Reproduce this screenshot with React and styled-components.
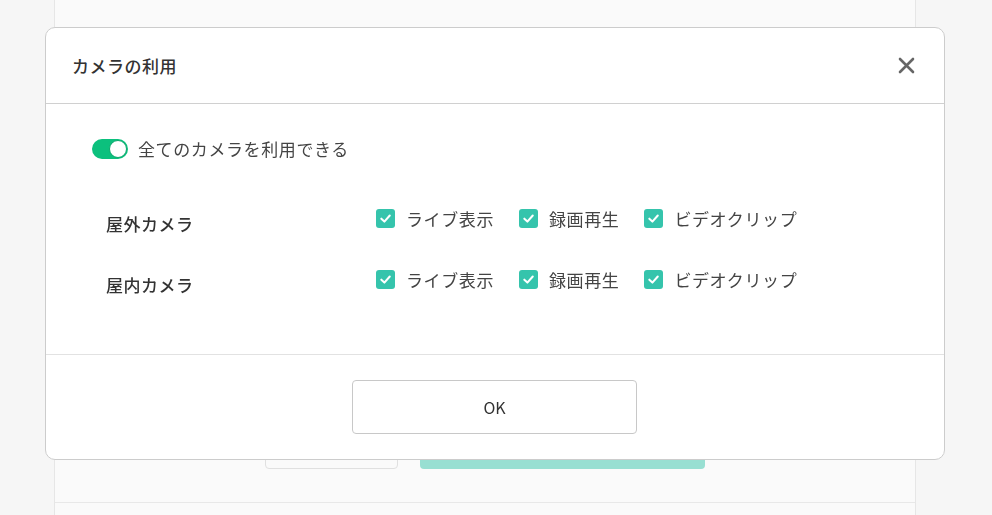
import React from "react";
import styled, { createGlobalStyle } from "styled-components";

const GlobalStyle = createGlobalStyle`
  html, body {
    margin: 0;
    padding: 0;
    background: #f6f6f6;
    font-family: "Noto Sans CJK JP", "Noto Sans", sans-serif;
    color: #333;
  }
`;

const cameras = [
  { id: "outdoor", name: "屋外カメラ" },
  { id: "indoor", name: "屋内カメラ" },
];

const permissions = ["ライブ表示", "録画再生", "ビデオクリップ"];

const CheckIcon = () => (
  <svg width="13" height="13" viewBox="0 0 14 14" fill="none">
    <path
      d="M2.5 7.2 L5.8 10.3 L11.6 3.8"
      stroke="#fff"
      strokeWidth="2.2"
      strokeLinecap="round"
      strokeLinejoin="round"
    />
  </svg>
);

const CloseIcon = () => (
  <svg width="17" height="17" viewBox="0 0 17 17" fill="none">
    <path
      d="M2 2 L15 15 M15 2 L2 15"
      stroke="#666"
      strokeWidth="2.6"
      strokeLinecap="round"
    />
  </svg>
);

const App = () => (
  <>
    <GlobalStyle />
    <Page>
      <Panel>
        <BackButtons>
          <GhostButton />
          <SaveButton />
        </BackButtons>
        <PanelDivider />
      </Panel>
    </Page>

    <Overlay>
      <Modal>
        <Header>
          <Title>カメラの利用</Title>
          <CloseButton aria-label="close">
            <CloseIcon />
          </CloseButton>
        </Header>

        <Body>
          <ToggleRow>
            <Toggle>
              <Knob />
            </Toggle>
            <ToggleLabel>全てのカメラを利用できる</ToggleLabel>
          </ToggleRow>

          <CameraList>
            {cameras.map((camera) => (
              <CameraRow key={camera.id}>
                <CameraName>{camera.name}</CameraName>
                <Options>
                  {permissions.map((label) => (
                    <Option key={label}>
                      <Box>
                        <CheckIcon />
                      </Box>
                      <OptionText>{label}</OptionText>
                    </Option>
                  ))}
                </Options>
              </CameraRow>
            ))}
          </CameraList>
        </Body>

        <Footer>
          <OkButton>OK</OkButton>
        </Footer>
      </Modal>
    </Overlay>
  </>
);

export default App;

const Page = styled.div`
  height: 515px;
  overflow: hidden;
`;

const Panel = styled.div`
  margin-left: 54px;
  width: 862px;
  height: 515px;
  background: #fafafa;
  border-left: 1px solid #e6e6e6;
  border-right: 1px solid #e6e6e6;
  display: flex;
  flex-direction: column;
  padding-top: 416px;
  box-sizing: border-box;
`;

const BackButtons = styled.div`
  display: flex;
  justify-content: center;
  gap: 22px;
`;

const GhostButton = styled.div`
  width: 133px;
  height: 53px;
  box-sizing: border-box;
  border: 1px solid #e0e0e0;
  border-radius: 4px;
  background: #fafafa;
`;

const SaveButton = styled.div`
  width: 285px;
  height: 53px;
  border-radius: 4px;
  background: #98dfd2;
`;

const PanelDivider = styled.div`
  margin-top: 33px;
  border-top: 1px solid #e8e8e8;
`;

const Overlay = styled.div`
  position: fixed;
  inset: 0;
`;

const Modal = styled.div`
  position: absolute;
  left: 45px;
  top: 27px;
  width: 900px;
  height: 433px;
  box-sizing: border-box;
  background: #fff;
  border: 1px solid #cccccc;
  border-radius: 10px;
  display: flex;
  flex-direction: column;
`;

const Header = styled.div`
  height: 75px;
  display: flex;
  align-items: center;
  justify-content: space-between;
  padding: 0 29px 0 26px;
  border-bottom: 1px solid #d0d0d0;
`;

const Title = styled.h2`
  margin: 0;
  font-size: 17px;
  font-weight: 500;
  letter-spacing: 0.5px;
  color: #333;
`;

const CloseButton = styled.button`
  border: none;
  background: none;
  padding: 0;
  display: flex;
  cursor: pointer;
`;

const Body = styled.div`
  flex: 1;
  padding: 35px 46px 0;
`;

const ToggleRow = styled.div`
  display: flex;
  align-items: center;
  gap: 10px;
`;

const Toggle = styled.div`
  width: 36px;
  height: 20px;
  border-radius: 10px;
  background: #0cc07d;
  display: flex;
  align-items: center;
  justify-content: flex-end;
  padding: 0 1px;
  box-sizing: border-box;
`;

const Knob = styled.div`
  width: 18px;
  height: 18px;
  border-radius: 50%;
  background: #fff;
  box-sizing: border-box;
  border: 1px solid #0aa86c;
`;

const ToggleLabel = styled.span`
  font-size: 17px;
  letter-spacing: 0.6px;
  color: #444;
  line-height: 20px;
`;

const CameraList = styled.div`
  margin-top: 50px;
  padding-left: 14px;
`;

const CameraRow = styled.div`
  height: 61px;
  display: flex;
  align-items: flex-start;
`;

const CameraName = styled.div`
  width: 270px;
  padding-top: 3px;
  font-size: 17px;
  line-height: 24px;
  font-weight: 500;
  letter-spacing: 0.5px;
  color: #333;
`;

const Options = styled.div`
  display: flex;
  gap: 25px;
`;

const Option = styled.label`
  display: flex;
  align-items: center;
  gap: 11px;
`;

const Box = styled.span`
  width: 19px;
  height: 19px;
  border-radius: 3px;
  background: #35c4ac;
  display: flex;
  align-items: center;
  justify-content: center;
`;

const OptionText = styled.span`
  font-size: 17px;
  line-height: 19px;
  letter-spacing: 0.6px;
  color: #444;
`;

const Footer = styled.div`
  height: 104px;
  border-top: 1px solid #e2e2e2;
  display: flex;
  align-items: center;
  justify-content: center;
  padding-right: 1px;
`;

const OkButton = styled.button`
  width: 285px;
  height: 54px;
  background: #fff;
  border: 1px solid #c8c8c8;
  border-radius: 4px;
  font-family: "Noto Sans CJK JP", "Noto Sans", sans-serif;
  font-size: 16px;
  color: #333;
  cursor: pointer;
`;
